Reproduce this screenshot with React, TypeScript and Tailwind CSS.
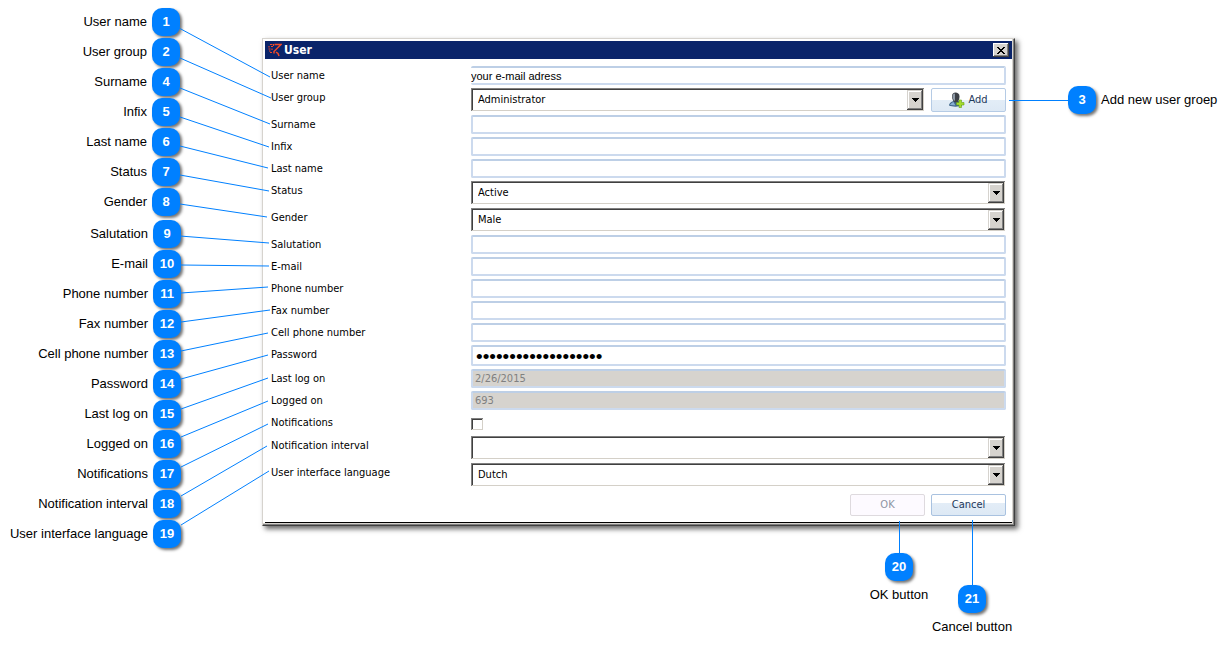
import React from "react";

type Point = [number, number];

type Callout = { n: number; label: string; from: Point; to: Point };

const upperCallouts: Callout[] = [
  { n: 1, label: "User name", from: [179, 28], to: [270, 77] },
  { n: 2, label: "User group", from: [180, 58], to: [271, 98] },
  { n: 4, label: "Surname", from: [180, 88], to: [270, 124] },
  { n: 5, label: "Infix", from: [180, 117], to: [269, 147] },
  { n: 6, label: "Last name", from: [180, 146], to: [268, 168] },
  { n: 7, label: "Status", from: [180, 175], to: [269, 191] },
  { n: 8, label: "Gender", from: [180, 204], to: [267, 217] },
];

const lowerCallouts: Callout[] = [
  { n: 9, label: "Salutation", from: [180, 236], to: [269, 243] },
  { n: 10, label: "E-mail", from: [181, 265], to: [269, 266] },
  { n: 11, label: "Phone number", from: [181, 293], to: [268, 287] },
  { n: 12, label: "Fax number", from: [181, 322], to: [270, 310] },
  { n: 13, label: "Cell phone number", from: [181, 351], to: [268, 333] },
  { n: 14, label: "Password", from: [181, 379], to: [268, 355] },
  { n: 15, label: "Last log on", from: [181, 409], to: [268, 378] },
  { n: 16, label: "Logged on", from: [181, 437], to: [268, 401] },
  { n: 17, label: "Notifications", from: [181, 467], to: [268, 424] },
  { n: 18, label: "Notification interval", from: [181, 496], to: [267, 446] },
  { n: 19, label: "User interface language", from: [181, 525], to: [269, 471] },
];

function Badge({ n }: { n: number }) {
  return (
    <span className="flex size-7 shrink-0 items-center justify-center rounded-[10px] bg-[#0080ff] text-[13px] leading-4 font-bold text-white shadow-[2px_2px_3px_rgba(0,0,0,0.55)]">
      {n}
    </span>
  );
}

function CalloutList({ items }: { items: Callout[] }) {
  return (
    <ul className="flex flex-col gap-0.5">
      {items.map((c) => (
        <li key={c.n} className="flex items-center justify-end gap-[5px] whitespace-nowrap">
          <span>{c.label}</span>
          <Badge n={c.n} />
        </li>
      ))}
    </ul>
  );
}

function Row({ id, label, children }: { id: string; label: string; children: React.ReactNode }) {
  return (
    <div className="flex items-start">
      <label htmlFor={id} className="w-[200px] shrink-0 leading-[19px]">
        {label}
      </label>
      <div className="flex min-w-0 flex-1">{children}</div>
    </div>
  );
}

const fieldClass =
  "h-[19px] w-full min-w-0 rounded-[2px] border-2 border-[#ccdaee] border-t-[#bdcfe6] bg-white px-[3px] outline-none";

function TextRow({ id, label }: { id: string; label: string }) {
  return (
    <Row id={id} label={label}>
      <input id={id} type="text" className={fieldClass} />
    </Row>
  );
}

function DisabledRow({ id, label, value }: { id: string; label: string; value: string }) {
  return (
    <Row id={id} label={label}>
      <input
        id={id}
        type="text"
        disabled
        defaultValue={value}
        className="h-[19px] w-full min-w-0 rounded-[2px] border-2 border-[#ccdaee] border-t-[#bdcfe6] bg-[#d6d3ce] px-0.5 text-[#808080]"
      />
    </Row>
  );
}

function Select({ id, value }: { id: string; value: string }) {
  return (
    <div className="relative mr-px mb-px h-[23px] min-w-0 flex-1">
      <select
        id={id}
        defaultValue={value}
        className="h-full w-full appearance-none bg-white px-[7px] pt-px shadow-[inset_1px_1px_#808080,inset_-1px_-1px_#d4d0c8,inset_2px_2px_#404040] outline-none"
      >
        <option>{value}</option>
      </select>
      <span className="pointer-events-none absolute top-0.5 right-px bottom-px flex w-4 items-center justify-center bg-[#d6d3ce] shadow-[inset_-1px_-1px_#404040,inset_1px_1px_#d6d3ce,inset_-2px_-2px_#808080,inset_2px_2px_#ffffff]">
        <svg width="7" height="4" viewBox="0 0 7 4" shapeRendering="crispEdges">
          <path d="M0 0h7v1H6v1H5v1H4v1H3V3H2V2H1V1H0z" />
        </svg>
      </span>
    </div>
  );
}

function AppIcon() {
  return (
    <svg width="14" height="14" viewBox="0 0 14 14" fill="none" stroke="#f04a28">
      <path d="M2 1.500h2.500M1 3v1.500M3 3.500h2M5.500 1v2M.5 6h2M4 5.500v1.500M1 8h1.500M2 9.500h2" strokeWidth="1.100" />
      <path d="M6.500 1.500h6.500L6 8.500v2M8 9l2 1.500 1 2.500" strokeWidth="1.500" />
    </svg>
  );
}

function AddUserIcon() {
  return (
    <svg width="16" height="16" viewBox="0 0 16 16">
      <path d="M0 13.500c0-2.500 2-3.500 4.500-4.500h5c2.500 1 3.500 2 3.500 4.500-3 1.500-10 1.500-13 0z" fill="#3d6488" />
      <path d="M1 13c.5-1.500 2-2.500 3.500-3l2 3.500z" fill="#86aed2" />
      <path d="M3 4.500C3 1.500 4.500.5 6.500.5s4 1 4 4-1.500 6-3.500 6-4-3-4-6z" fill="#3c4046" />
      <path d="M3.500 4.500c0-2 1-3 2.500-3v7.500c-1.500-1-2.500-2.500-2.500-4.500z" fill="#8d99a6" />
      <path d="M10 8h2.500v2.500H15V13h-2.500v2.500H10V13H7.500v-2.500H10z" fill="#a5dc2e" stroke="#649f18" strokeWidth=".6" />
    </svg>
  );
}

function BottomCallout({ n, label, lineClass }: { n: number; label: string; lineClass: string }) {
  return (
    <div className="flex w-[72px] flex-col items-center whitespace-nowrap">
      <span className={lineClass} />
      <Badge n={n} />
      <span className="mt-1.5 leading-4">{label}</span>
    </div>
  );
}

export default function App() {
  return (
    <main className="flex items-start bg-white font-['Liberation_Sans',Arial,sans-serif] text-[13px] leading-4 text-black">
      <aside className="relative w-[262px] shrink-0 pt-2">
        <div className="w-[180px] pb-1">
          <CalloutList items={upperCallouts} />
        </div>
        <div className="w-[181px]">
          <CalloutList items={lowerCallouts} />
        </div>
        <svg
          className="pointer-events-none absolute top-0 left-0 z-10 overflow-visible"
          width="272"
          height="550"
          aria-hidden="true"
        >
          {[...upperCallouts, ...lowerCallouts].map((c) => (
            <line
              key={c.n}
              x1={c.from[0]}
              y1={c.from[1]}
              x2={c.to[0]}
              y2={c.to[1]}
              stroke="#0080ff"
              strokeWidth="1"
            />
          ))}
        </svg>
      </aside>

      <div className="min-w-0 flex-1 pt-[38px]">
        <section className="border border-[#d6d3ce] border-r-[#404040] border-b-[#404040] bg-white p-0.5 font-['DejaVu_Sans_Condensed','DejaVu_Sans',sans-serif] text-[11px] shadow-[inset_-1px_-1px_#808080,inset_-2px_-2px_#d6d3ce,3px_3px_5px_rgba(0,0,0,0.6)]">
          <header className="flex h-[18px] items-center bg-[#0a246a] px-[3px] text-white">
            <AppIcon />
            <h1 className="flex-1 pl-0.5 text-[12px] font-bold">User</h1>
            <button
              type="button"
              aria-label="Close"
              className="flex h-[14px] w-4 items-center justify-center bg-[#d6d3ce] shadow-[inset_-1px_-1px_#404040,inset_1px_1px_#ffffff,inset_-2px_-2px_#808080]"
            >
              <svg width="8" height="7" viewBox="0 0 8 7" shapeRendering="crispEdges">
                <path d="M0 0h2v1h1v1h2V1h1V0h2v1H7v1H6v1H5v1h1v1h1v1h1v1H6V6H5V5H3v1H2v1H0V6h1V5h1V4h1V3H2V2H1V1H0z" />
              </svg>
            </button>
          </header>
          <form className="border-b border-black px-1.5 pt-[7px] pb-1.5" onSubmit={(e) => e.preventDefault()}>
            <div className="flex flex-col gap-[3px]">
              <Row id="username" label="User name">
                <input
                  id="username"
                  type="text"
                  defaultValue="your e-mail adress"
                  className="h-[19px] w-full min-w-0 rounded-[2px] border-2 border-l-0 border-[#ccdaee] border-t-[#bdcfe6] bg-white font-['Liberation_Sans',Arial,sans-serif] outline-none"
                />
              </Row>
              <Row id="group" label="User group">
                <Select id="group" value="Administrator" />
                <button
                  type="button"
                  className="ml-1.5 flex h-6 w-[75px] items-center justify-center gap-[3px] rounded-[2px] border border-[#b5cbe5] bg-linear-to-b from-white from-50% via-[#e3edf7] via-50% to-[#dde9f5] text-[#1e395b]"
                >
                  <AddUserIcon />
                  Add
                </button>
              </Row>
              <TextRow id="surname" label="Surname" />
              <TextRow id="infix" label="Infix" />
              <TextRow id="lastname" label="Last name" />
              <Row id="status" label="Status">
                <Select id="status" value="Active" />
              </Row>
              <Row id="gender" label="Gender">
                <Select id="gender" value="Male" />
              </Row>
              <TextRow id="salutation" label="Salutation" />
              <TextRow id="email" label="E-mail" />
              <TextRow id="phone" label="Phone number" />
              <TextRow id="fax" label="Fax number" />
              <TextRow id="cell" label="Cell phone number" />
              <Row id="password" label="Password">
                <input
                  id="password"
                  type="password"
                  defaultValue="1234567890123456789"
                  className="h-[21px] w-full min-w-0 rounded-[2px] border-2 border-[#ccdaee] border-t-[#bdcfe6] bg-white px-[3px] pt-0.5 font-['Liberation_Sans',Arial,sans-serif] text-[19px] outline-none"
                />
              </Row>
              <DisabledRow id="lastlogon" label="Last log on" value="2/26/2015" />
              <DisabledRow id="loggedon" label="Logged on" value="693" />
              <Row id="notifications" label="Notifications">
                <div className="flex h-5 items-end pb-[3px]">
                  <input
                    id="notifications"
                    type="checkbox"
                    className="size-3 appearance-none bg-white shadow-[inset_1px_1px_#808080,inset_-1px_-1px_#d4d0c8,inset_2px_2px_#404040]"
                  />
                </div>
              </Row>
              <Row id="interval" label="Notification interval">
                <Select id="interval" value="" />
              </Row>
              <Row id="language" label="User interface language">
                <Select id="language" value="Dutch" />
              </Row>
            </div>
            <div className="mt-[7px] flex justify-end gap-1.5">
              <button
                type="button"
                disabled
                className="h-[22px] w-[75px] rounded-[2px] border border-[#dedade] bg-[#fdfaff] text-[#8d95a3]"
              >
                OK
              </button>
              <button
                type="button"
                className="h-[22px] w-[75px] rounded-[2px] border border-[#a9c2e0] bg-linear-to-b from-white from-40% via-[#e3edf7] via-40% to-[#dde9f5] text-[#1e395b]"
              >
                Cancel
              </button>
            </div>
          </form>
        </section>

        <div className="relative z-10 -mt-1.5 mr-[7px] flex items-start justify-end gap-px">
          <BottomCallout n={20} label="OK button" lineClass="mt-px h-8 w-0.5 border-r border-[#0080ff]" />
          <BottomCallout n={21} label="Cancel button" lineClass="h-[65px] w-0.5 border-r border-[#0080ff]" />
        </div>
      </div>

      <aside className="relative z-10 w-[217px] shrink-0 pt-[86px]">
        <div className="-ml-1.5 flex items-center whitespace-nowrap">
          <span className="h-px w-[59px] bg-[#0080ff]" />
          <Badge n={3} />
          <span className="ml-[5px]">Add new user groep</span>
        </div>
      </aside>
    </main>
  );
}
